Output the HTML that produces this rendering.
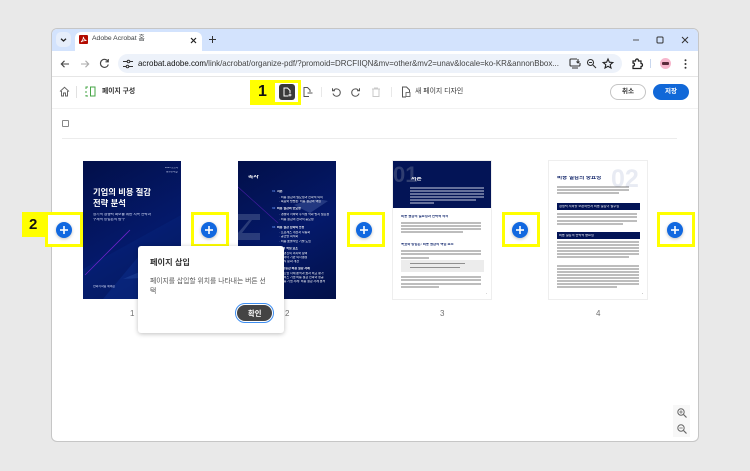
<!DOCTYPE html>
<html lang="ko"><head><meta charset="utf-8"><style>
*{box-sizing:border-box}
html,body{margin:0;padding:0}
body{width:750px;height:471px;background:#e9e9e9;position:relative;overflow:hidden;font-family:"Liberation Sans","Noto Sans CJK KR",sans-serif;color:#2c2c2c}
.a{position:absolute}
.t{position:absolute;white-space:nowrap;line-height:1}
.y{position:absolute;border:3px solid #ffff00;top:212px;width:38px;height:35px;background:#fff}
.p{position:absolute;width:16px;height:16px;border-radius:50%;background:#1168e0;top:222px;box-shadow:0 1px 3px rgba(0,0,0,.25)}
.p:before{content:"";position:absolute;left:4px;top:7px;width:8px;height:2px;background:rgba(255,255,255,.8)}
.p:after{content:"";position:absolute;left:7px;top:4px;width:2px;height:8px;background:rgba(255,255,255,.8)}
.pg{position:absolute;top:161px;width:98px;height:138px;overflow:hidden}
.d{background:#02124f linear-gradient(150deg,#020f49 0%,#04196a 55%,#021048 100%)}
.w{background:#fff;box-shadow:0 0 0 1px #eeeeee}
.l{position:absolute;white-space:nowrap;overflow:hidden;line-height:1;font-size:3px}
.n{position:absolute;top:310px;font-size:8px;color:#707070;line-height:1}
svg{position:absolute;overflow:visible}
.b{background:#333;height:2px;position:absolute;opacity:.32}
.c{background:#dfe3ef;height:2px;position:absolute;opacity:.45}
</style></head><body>

<div class="a" style="left:52px;top:29px;width:646px;height:412px;background:#fff;border-radius:5px;box-shadow:0 0 0 1px #c6c6c6;overflow:hidden"></div>
<div class="a" style="left:52px;top:29px;width:646px;height:22px;background:#d3e3fd;border-radius:5px 5px 0 0"></div>

<div class="a" style="left:56px;top:32px;width:15px;height:15px;background:#e6eefb;border-radius:5px"></div>
<svg style="left:60px;top:38px" width="7" height="4"><path d="M1 .8L3.500 3 6 .8" fill="none" stroke="#222" stroke-width="1.300"/></svg>
<div class="a" style="left:75px;top:32px;width:127px;height:19px;background:#fff;border-radius:6px 6px 0 0"></div>
<div class="a" style="left:79px;top:35px;width:9px;height:9px;background:#b30b00;border-radius:1px"></div>
<svg style="left:80px;top:36px" width="7" height="7"><path d="M1 6C3 4 3.500 2 3.300 .8 3.800 3 5 4.200 6.500 4.500 4.500 4.500 2.500 5 1 6Z" fill="none" stroke="#fff" stroke-width=".8"/></svg>
<div class="t" style="left:92px;top:36px;font-size:6.800px;color:#3c4043">Adobe Acrobat 홈</div>
<svg style="left:190px;top:37px" width="7" height="7"><path d="M1 1L6 6M6 1L1 6" stroke="#222" stroke-width="1.200"/></svg>
<svg style="left:208px;top:35px" width="9" height="9"><path d="M4.500 1V8M1 4.500H8" stroke="#333" stroke-width="1"/></svg>
<svg style="left:632px;top:39px" width="9" height="2"><path d="M1 1H7" stroke="#555" stroke-width="1"/></svg>
<svg style="left:656px;top:36px" width="8" height="8"><rect x="1" y="1" width="6" height="6" rx="1" fill="none" stroke="#333" stroke-width="1"/></svg>
<svg style="left:681px;top:36px" width="8" height="8"><path d="M1 1L7 7M7 1L1 7" stroke="#333" stroke-width="1"/></svg>

<div class="a" style="left:52px;top:76px;width:646px;height:1px;background:#e6e6e6"></div>
<svg style="left:60px;top:59px" width="10" height="10"><path d="M9 5H1.500M4.500 1.800L1.300 5 4.500 8.200" fill="none" stroke="#444" stroke-width="1.100"/></svg>
<svg style="left:80px;top:59px" width="10" height="10"><path d="M1 5H8.500M5.500 1.800L8.700 5 5.500 8.200" fill="none" stroke="#aaa" stroke-width="1.100"/></svg>
<svg style="left:99px;top:58px" width="11" height="11"><path d="M9 3.500A4 4 0 1 0 9.300 6.500M9.300 1V3.800H6.500" fill="none" stroke="#444" stroke-width="1.100"/></svg>
<div class="a" style="left:118px;top:54px;width:504px;height:19px;background:#edf2fa;border-radius:10px"></div>
<svg style="left:123px;top:59px" width="10" height="10"><path d="M0 2.500H4M7 2.500H10M0 7.500H3M6 7.500H10" stroke="#333" stroke-width="1"/><circle cx="5.500" cy="2.500" r="1.300" fill="none" stroke="#333"/><circle cx="4.500" cy="7.500" r="1.300" fill="none" stroke="#333"/></svg>
<div class="t" style="left:138px;top:59.500px;font-size:7.950px;color:#444;width:424px;overflow:hidden;height:10px"><span style="color:#111">acrobat.adobe.com</span>/link/acrobat/organize-pdf/?promoid=DRCFIIQN&amp;mv=other&amp;mv2=unav&amp;locale=ko-KR&amp;annonBbox...</div>
<svg style="left:569px;top:58px" width="12" height="11"><path d="M8 1H2Q1 1 1 2V7Q1 8 2 8H10Q11 8 11 7V5M3 10H9M9 1V5M7.500 3.500L9 5 10.500 3.500" fill="none" stroke="#333" stroke-width="1.100"/></svg>
<svg style="left:586px;top:58px" width="11" height="11"><circle cx="4.500" cy="4.500" r="3" fill="none" stroke="#333" stroke-width="1.100"/><path d="M7 7L10 10M3 4.500H6" stroke="#333" stroke-width="1.100"/></svg>
<svg style="left:602px;top:58px" width="12" height="11"><path d="M6 1L7.400 4.200 10.800 4.500 8.200 6.700 9 10 6 8.300 3 10 3.800 6.700 1.200 4.500 4.600 4.200Z" fill="none" stroke="#222" stroke-width="1.100"/></svg>
<svg style="left:631px;top:58px" width="12" height="11"><path d="M2 3H4.500Q4.500 1 6 1T7.500 3H10V5.500Q11.500 5.500 11.500 7T10 8.500V10.500H2V8Q3.500 8 3.500 6.500T2 5Z" fill="none" stroke="#222" stroke-width="1.200"/></svg>
<div class="a" style="left:650px;top:59px;width:1px;height:9px;background:#c9d7ee"></div>
<div class="a" style="left:660px;top:58px;width:11px;height:11px;background:#f7b6cc;border-radius:50%"></div>
<div class="a" style="left:662px;top:62px;width:7px;height:3px;background:#5b2b3b;border-radius:1px"></div>
<svg style="left:684px;top:59px" width="3" height="10"><circle cx="1.500" cy="1.300" r="1" fill="#333"/><circle cx="1.500" cy="5" r="1" fill="#333"/><circle cx="1.500" cy="8.700" r="1" fill="#333"/></svg>

<svg style="left:59px;top:86px" width="11" height="11"><path d="M1 5.500L5.500 1.300 10 5.500M2.500 5V10H4.500V7H6.500V10H8.500V5" fill="none" stroke="#666" stroke-width="1"/></svg>
<div class="a" style="left:76px;top:86px;width:1px;height:12px;background:#e1e1e1"></div>
<svg style="left:85px;top:86px" width="11" height="11"><rect x="5.500" y="1" width="4.500" height="9" fill="none" stroke="#46a546" stroke-width="1"/><path d="M1 3V1H3M1 5V7M1 9V10H3" fill="none" stroke="#46a546" stroke-width="1"/></svg>
<div class="t" style="left:102px;top:88.500px;font-size:6.800px;font-weight:700;color:#333">페이지 구성</div>

<div class="a" style="left:250px;top:80px;width:51px;height:25px;background:#ffff00"></div>
<div class="t" style="left:258px;top:84px;font-size:16px;font-weight:700;color:#111">1</div>
<div class="a" style="left:275px;top:83px;width:23px;height:19px;background:#fff"></div>
<div class="a" style="left:279px;top:84px;width:16px;height:16px;background:#3a3a3a;border-radius:3px"></div>
<svg style="left:282px;top:87px" width="11" height="10"><path d="M6.500 9H2V1H5.500L8 3.500V6" fill="none" stroke="#fff" stroke-width="1"/><path d="M8 6.500V9.500M6.500 8H9.500" stroke="#fff" stroke-width=".9"/></svg>
<svg style="left:302px;top:86px" width="11" height="12"><path d="M7 10.500H2V1.500H5.500L8 4V6" fill="none" stroke="#555" stroke-width="1"/><path d="M5.500 7H10.500" stroke="#555" stroke-width="1"/></svg>
<div class="a" style="left:321px;top:87px;width:1px;height:10px;background:#e8e8e8"></div>
<svg style="left:331px;top:87px" width="10" height="10"><path d="M2.500 3.500A3.700 3.700 0 1 1 2 6.500M1.500 1.300V3.800H4" fill="none" stroke="#555" stroke-width="1"/></svg>
<svg style="left:351px;top:87px" width="10" height="10"><path d="M7.500 3.500A3.700 3.700 0 1 0 8 6.500M8.500 1.300V3.800H6" fill="none" stroke="#555" stroke-width="1"/></svg>
<svg style="left:371px;top:87px" width="10" height="10"><path d="M1 2H9M3.500 2V1H6.500V2M2 2.500V9.500H8V2.500" fill="none" stroke="#c9c9c9" stroke-width="1"/></svg>
<div class="a" style="left:391px;top:87px;width:1px;height:10px;background:#e8e8e8"></div>
<svg style="left:401px;top:86px" width="10" height="12"><path d="M5 11H1.500V1H5.500L8.500 4V6" fill="none" stroke="#555" stroke-width="1"/><rect x="5" y="6.500" width="4" height="4" fill="none" stroke="#555" stroke-width=".8"/></svg>
<div class="t" style="left:415px;top:88.500px;font-size:6.900px;color:#333">새 페이지 디자인</div>
<div class="a" style="left:610px;top:84px;width:36px;height:16px;border:1px solid #c4c4c4;border-radius:8px;background:#fff"></div>
<div class="t" style="left:622px;top:89px;font-size:6.500px;font-weight:700;color:#333">취소</div>
<div class="a" style="left:653px;top:84px;width:36px;height:16px;background:#1168d8;border-radius:8px"></div>
<div class="t" style="left:665px;top:89px;font-size:6.500px;font-weight:700;color:#fff">저장</div>
<div class="a" style="left:52px;top:108px;width:646px;height:1px;background:#f2f2f2"></div>
<div class="a" style="left:62px;top:120px;width:7px;height:7px;border:1px solid #888;border-radius:1px"></div>
<div class="a" style="left:62px;top:138px;width:615px;height:1px;background:#ececec"></div>

<!-- Page 1 -->
<div class="pg d" style="left:83px">
<svg style="left:0;top:0" width="98" height="138"><path d="M0 138V108L98 54V138Z" fill="#0a2a88" opacity=".3"/><path d="M20 138L60 90 98 108V138Z" fill="#0d379c" opacity=".35"/><path d="M2 114L47 69" stroke="#6a22c8" stroke-width=".8"/><path d="M40 118Q70 105 98 95V116Q70 116 40 118Z" fill="#3d6bc8" opacity=".25"/></svg>
<div class="l" style="left:82px;top:6px;font-size:2.500px;color:#dfe6ff">2025 보고서</div>
<div class="l" style="left:83px;top:10px;font-size:2.500px;color:#dfe6ff">경영전략실</div>
<div class="l" style="left:10px;top:27px;font-size:8.300px;font-weight:700;color:#fff">기업의 비용 절감</div>
<div class="l" style="left:10px;top:38px;font-size:8.300px;font-weight:700;color:#fff">전략 분석</div>
<div class="l" style="left:10px;top:52px;font-size:3.600px;color:#dfe6ff">장기적 경쟁력 확보를 위한 지속 전략과</div>
<div class="l" style="left:10px;top:57px;font-size:3.600px;color:#dfe6ff">구체적 방법론의 탐구</div>
<div class="l" style="left:10px;top:124px;font-size:2.900px;color:#dfe6ff">전략기획팀 제이슨</div>
</div>

<!-- Page 2 -->
<div class="pg d" style="left:238px">
<svg style="left:0;top:0" width="98" height="138"><path d="M0 26L40 62" stroke="#3f1c9c" stroke-width=".7" fill="none"/><path d="M56 44Q75 36 90 40L72 52Z" fill="#7f9ad8" opacity=".25"/><path d="M0 53H22V59H14L4 72H22V79H0V72L11 59H0Z" fill="#5a6a9a" opacity=".45"/></svg>
<div class="l" style="left:10px;top:14px;font-size:5.800px;font-weight:700;color:#fff">목차</div>
<div class="l" style="left:34px;top:29px;font-size:3px;font-weight:700;color:#fff"><span style="color:#5b86e6">01</span>&nbsp;&nbsp;서론</div>
<div class="l" style="left:41px;top:35px;font-size:3px;color:#fff">· 비용 절감의 필요성과 전략적 의의</div>
<div class="l" style="left:41px;top:39px;font-size:3px;color:#fff">· 목표와 방법론: 비용 절감의 핵심</div>
<div class="l" style="left:34px;top:46px;font-size:3px;font-weight:700;color:#fff"><span style="color:#5b86e6">02</span>&nbsp;&nbsp;비용 절감의 중요성</div>
<div class="l" style="left:41px;top:52px;font-size:3px;color:#fff">· 경쟁력 저하와 수익성 악화 방지 필요성</div>
<div class="l" style="left:41px;top:57px;font-size:3px;color:#fff">· 비용 절감의 전략적 중요성</div>
<div class="l" style="left:34px;top:65px;font-size:3px;font-weight:700;color:#fff"><span style="color:#5b86e6">03</span>&nbsp;&nbsp;비용 절감 전략의 종류</div>
<div class="l" style="left:41px;top:70px;font-size:3px;color:#fff">· 프로세스 개선과 자동화</div>
<div class="l" style="left:41px;top:74px;font-size:3px;color:#fff">· 공급망 최적화</div>
<div class="l" style="left:41px;top:79px;font-size:3px;color:#fff">· 비용 효율적인 기술 도입</div>
<div class="l" style="left:34px;top:86px;font-size:3px;font-weight:700;color:#fff"><span style="color:#5b86e6">04</span>&nbsp;&nbsp;전략의 핵심 요소</div>
<div class="l" style="left:41px;top:91px;font-size:3px;color:#fff">· 경영진의 의지와 참여</div>
<div class="l" style="left:41px;top:95px;font-size:3px;color:#fff">· 데이터 기반 의사결정</div>
<div class="l" style="left:41px;top:99px;font-size:3px;color:#fff">· 조직 문화 개선</div>
<div class="l" style="left:34px;top:106px;font-size:3px;font-weight:700;color:#fff"><span style="color:#5b86e6">05</span>&nbsp;&nbsp;지속가능한 비용 절감 사례</div>
<div class="l" style="left:41px;top:111px;font-size:3px;color:#fff">· 제조업 사례 분석과 효과 비교 평가</div>
<div class="l" style="left:41px;top:115px;font-size:3px;color:#fff">· 서비스 기업 비용 절감 전략과 성공</div>
<div class="l" style="left:41px;top:119px;font-size:3px;color:#fff">· 금융 기업 사례: 비용 절감 사례 분석</div>
</div>

<!-- Page 3 -->
<div class="pg w" style="left:393px">
<div class="a" style="left:0;top:0;width:98px;height:47px;background:#031456"></div>
<div class="l" style="left:0;top:3px;font-size:22px;font-weight:700;color:#2f3d70">01</div>
<div class="l" style="left:18px;top:16px;font-size:5.800px;font-weight:700;color:#fff">서론</div>
<div class="c" style="left:17px;top:26px;width:74px"></div><div class="c" style="left:17px;top:29px;width:74px"></div><div class="c" style="left:17px;top:32px;width:74px"></div><div class="c" style="left:17px;top:35px;width:74px"></div><div class="c" style="left:17px;top:38px;width:66px"></div><div class="c" style="left:17px;top:41px;width:24px"></div>
<div class="l" style="left:8px;top:54px;font-size:3.400px;font-weight:700;color:#152a70">비용 절감의 필요성과 전략적 의의</div>
<div class="b" style="left:8px;top:61px;width:80px"></div><div class="b" style="left:8px;top:64px;width:80px"></div><div class="b" style="left:8px;top:67px;width:80px"></div><div class="b" style="left:8px;top:70px;width:62px"></div>
<div class="l" style="left:8px;top:82px;font-size:3.400px;font-weight:700;color:#152a70">목표와 방법론: 비용 절감의 핵심 요소</div>
<div class="b" style="left:8px;top:89px;width:80px"></div><div class="b" style="left:8px;top:92px;width:80px"></div><div class="b" style="left:8px;top:96px;width:28px"></div>
<div class="a" style="left:8px;top:99px;width:83px;height:12px;background:#ececec"></div>
<div class="b" style="left:17px;top:102px;width:55px;height:1px;opacity:.5"></div><div class="b" style="left:17px;top:106px;width:50px;height:1px;opacity:.5"></div>
<div class="b" style="left:8px;top:115px;width:80px"></div><div class="b" style="left:8px;top:118px;width:80px"></div><div class="b" style="left:8px;top:122px;width:80px"></div><div class="b" style="left:8px;top:125px;width:38px"></div>
<div class="l" style="left:93px;top:132px;font-size:2.500px;color:#777">3</div>
</div>

<!-- Page 4 -->
<div class="pg w" style="left:549px">
<div class="l" style="left:62px;top:6px;font-size:25px;font-weight:700;color:#e8ebf3">02</div>
<div class="l" style="left:8px;top:15px;font-size:5.600px;font-weight:700;color:#14276b">비용 절감의 중요성</div>
<div class="b" style="left:8px;top:25px;width:72px"></div><div class="b" style="left:8px;top:28px;width:72px"></div><div class="b" style="left:8px;top:31px;width:62px"></div>
<div class="a" style="left:8px;top:42px;width:83px;height:7px;background:#031456"></div>
<div class="l" style="left:10px;top:44px;font-size:3.200px;color:#fff">경쟁력 저하를 보완하면서 비용 절감이 필수성</div>
<div class="b" style="left:8px;top:52px;width:80px"></div><div class="b" style="left:8px;top:55px;width:80px"></div><div class="b" style="left:8px;top:59px;width:80px"></div><div class="b" style="left:8px;top:62px;width:66px"></div>
<div class="a" style="left:8px;top:71px;width:83px;height:7px;background:#031456"></div>
<div class="l" style="left:10px;top:73px;font-size:3.200px;color:#fff">비용 절감의 전략적 중요성</div>
<div class="b" style="left:8px;top:80px;width:82px"></div><div class="b" style="left:8px;top:83px;width:82px"></div><div class="b" style="left:8px;top:86px;width:82px"></div><div class="b" style="left:8px;top:89px;width:82px"></div><div class="b" style="left:8px;top:92px;width:82px"></div><div class="b" style="left:8px;top:95px;width:72px"></div>
<div class="b" style="left:8px;top:104px;width:82px"></div><div class="b" style="left:8px;top:107px;width:82px"></div><div class="b" style="left:8px;top:110px;width:82px"></div><div class="b" style="left:8px;top:113px;width:82px"></div><div class="b" style="left:8px;top:116px;width:82px"></div><div class="b" style="left:8px;top:119px;width:82px"></div><div class="b" style="left:8px;top:122px;width:82px"></div><div class="b" style="left:8px;top:125px;width:60px"></div>
<div class="l" style="left:93px;top:132px;font-size:2.500px;color:#777">4</div>
</div>

<div class="n" style="left:130px">1</div>
<div class="n" style="left:285px">2</div>
<div class="n" style="left:440px">3</div>
<div class="n" style="left:596px">4</div>

<!-- Yellow highlights -->
<div class="a" style="left:22px;top:212px;width:24px;height:25px;background:#ffff00"></div>
<div class="t" style="left:29px;top:217px;font-size:15px;font-weight:700;color:#111">2</div>
<div class="y" style="left:45px"></div>
<div class="y" style="left:191px"></div>
<div class="y" style="left:347px"></div>
<div class="y" style="left:502px"></div>
<div class="y" style="left:657px"></div>
<div class="p" style="left:56px"></div>
<div class="p" style="left:201px"></div>
<div class="p" style="left:356px"></div>
<div class="p" style="left:512px"></div>
<div class="p" style="left:667px"></div>

<!-- Popover -->
<div class="a" style="left:138px;top:246px;width:146px;height:87px;background:#fff;border-radius:3px;box-shadow:0 1px 5px rgba(0,0,0,.25)"></div>
<div class="t" style="left:150px;top:259px;font-size:8.200px;font-weight:700;color:#333">페이지 삽입</div>
<div class="t" style="left:150px;top:278.500px;font-size:6.800px;color:#555">페이지를 삽입할 위치를 나타내는 버튼 선</div>
<div class="t" style="left:150px;top:288.500px;font-size:6.800px;color:#555">택</div>
<div class="a" style="left:235px;top:303px;width:39px;height:20px;border:1.500px solid #3d8df0;border-radius:10px;background:#fff"></div>
<div class="a" style="left:237px;top:305px;width:35px;height:16px;background:#444;border-radius:8px"></div>
<div class="t" style="left:248px;top:309.500px;font-size:7.300px;font-weight:700;color:#fff">확인</div>

<!-- Zoom -->
<div class="a" style="left:673px;top:405px;width:17px;height:32px;background:#f7f7f7"></div>
<svg style="left:677px;top:408px" width="10" height="10"><circle cx="4" cy="4" r="3.200" fill="none" stroke="#666" stroke-width="1"/><path d="M6.500 6.500L9.500 9.500" stroke="#666" stroke-width="1.200"/><path d="M2.300 4H5.700M4 2.300V5.700" stroke="#666" stroke-width=".8"/></svg>
<svg style="left:677px;top:424px" width="10" height="10"><circle cx="4" cy="4" r="3.200" fill="none" stroke="#666" stroke-width="1"/><path d="M6.500 6.500L9.500 9.500" stroke="#666" stroke-width="1.200"/><path d="M2.300 4H5.700" stroke="#666" stroke-width=".8"/></svg>
</body></html>
